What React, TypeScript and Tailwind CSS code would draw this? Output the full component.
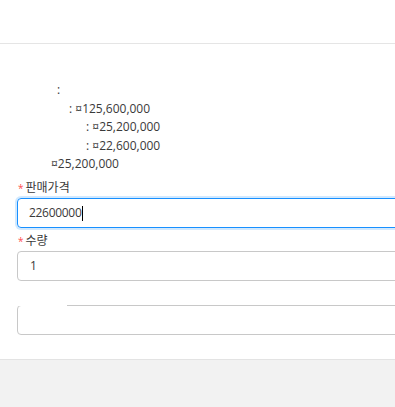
export default function App() {
  const font = { fontFamily: '"Open Sans", "Noto Sans CJK KR", sans-serif' };
  return (
    <div className="w-[395px] h-[407px] overflow-hidden bg-white flex flex-col text-[12px] text-[#3a3a3a]" style={font}>
      <div className="h-[44px] shrink-0 border-b border-[#e5e5e5]" />
      <div className="flex-1 flex flex-col pl-[17px]">
        <div className="mt-[37px] flex flex-col leading-[18.5px]">
          <div className="pl-[40px]">:</div>
          <div className="pl-[52px]">: ¤125,600,000</div>
          <div className="pl-[69px]">: ¤25,200,000</div>
          <div className="pl-[69px]">: ¤22,600,000</div>
          <div className="pl-[34px]">¤25,200,000</div>
        </div>
        <div className="mt-[4.5px] flex flex-col">
          <div className="h-[20px] flex items-center">
            <span className="text-[#ff4d4f] text-[10px] mr-[2px] ml-[1px]">*</span>
            <span>판매가격</span>
          </div>
          <div className="w-[420px] h-[30px] rounded-[4px] border border-[#1890ff] shadow-[0_0_0_2px_rgba(24,144,255,0.2)] flex items-center pl-[11px]">
            <span className="tracking-[-0.3px]">22600000</span>
            <span className="w-px h-[15px] bg-black" />
          </div>
        </div>
        <div className="mt-[3px] flex flex-col">
          <div className="h-[20px] flex items-center">
            <span className="text-[#ff4d4f] text-[10px] mr-[2px] ml-[1px]">*</span>
            <span>수량</span>
          </div>
          <div className="w-[420px] h-[30px] rounded-[4px] border border-[#c8c8c8] flex items-center pl-[12px]">
            1
          </div>
        </div>
        <fieldset className="mt-[24px] w-[420px] h-[30px] rounded-[4px] border border-[#c8c8c8]">
          <legend className="w-[49px] h-0 p-0" />
        </fieldset>
      </div>
      <div className="h-[48px] shrink-0 bg-[#f2f2f2] border-t border-[#e3e3e3]" />
    </div>
  );
}
